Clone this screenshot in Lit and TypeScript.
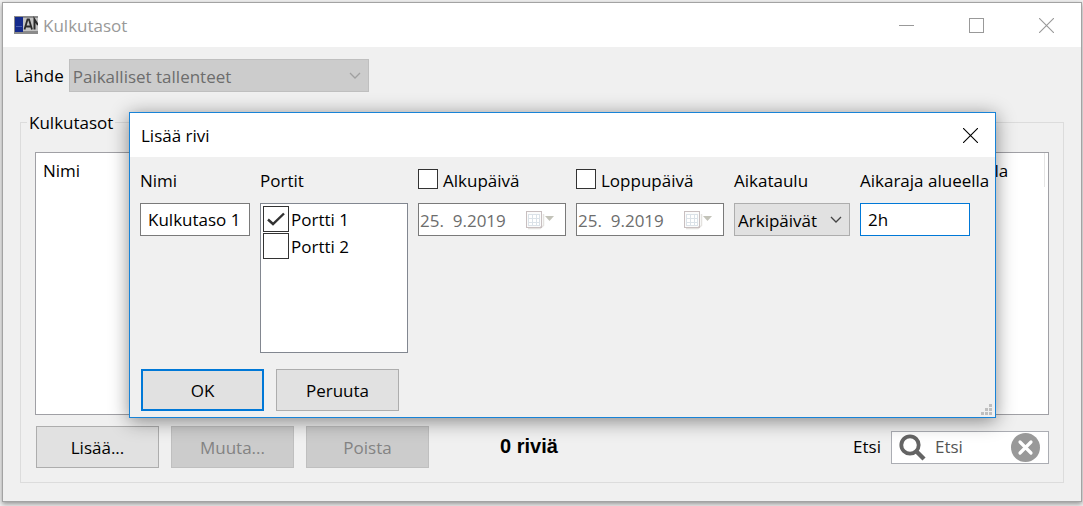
import { LitElement, html, css, svg } from "lit";
import { customElement, property, state } from "lit/decorators.js";

const controls = css`
  * {
    box-sizing: border-box;
  }
  button,
  input,
  select {
    font: inherit;
    color: inherit;
    margin: 0;
    border-radius: 0;
    outline: none;
  }
  .push {
    width: 123px;
    height: 42px;
    padding: 2px 0 0;
    border: 1px solid #adadad;
    background: #e1e1e1;
    color: #000;
  }
  .push:disabled {
    background: #ccc;
    border-color: #bfbfbf;
    color: #838383;
  }
  .push.primary {
    border: 2px solid #0078d7;
  }
  .combo {
    display: grid;
    align-items: center;
  }
  .combo > select,
  .combo > svg {
    grid-area: 1 / 1;
  }
  .combo > select {
    appearance: none;
    width: 100%;
    height: 33px;
    padding: 2px 3px 0;
    border: 1px solid #adadad;
    background: #e1e1e1;
  }
  .combo > select:disabled {
    background: #ccc;
    border-color: #bfbfbf;
    color: #6d6d6d;
    opacity: 1;
  }
  .combo > svg {
    justify-self: end;
    margin-right: 7px;
    pointer-events: none;
  }
  .titlebar {
    display: flex;
    align-items: center;
    height: 44px;
    background: #fff;
  }
  .caption {
    flex: 1;
  }
  .tool {
    display: grid;
    place-items: center;
    padding: 0;
    border: 0;
    background: none;
  }
`;

const chevron = (color: string) => html`
  <svg width="14" height="8" viewBox="0 0 14 8" aria-hidden="true">
    <path d="M2 1 L7 6 L12 1" fill="none" stroke=${color} stroke-width="1.3" />
  </svg>
`;

const cross = html`
  <svg width="15" height="15" viewBox="0 0 15 15" aria-hidden="true">
    <path d="M0 0 L15 15 M15 0 L0 15" fill="none" stroke="currentColor" stroke-width="1.1" />
  </svg>
`;

@customElement("date-field")
export class DateField extends LitElement {
  @property() label = "";
  @property() value = "";
  @state() private active = false;

  static styles = [
    controls,
    css`
      :host {
        display: block;
      }
      .head {
        display: flex;
        align-items: center;
        gap: 5px;
        height: 24px;
        margin-bottom: 11px;
      }
      .head label {
        padding-top: 2px;
      }
      .tick {
        appearance: none;
        width: 20px;
        height: 20px;
        margin-bottom: 3px;
        border: 1px solid #333;
        background: #fff;
      }
      .tick:checked {
        box-shadow: inset 0 0 0 4px #fff;
        background: #333;
      }
      .box {
        display: flex;
        align-items: center;
        height: 33px;
        border: 1px solid #7a7a7a;
        background: #fff;
      }
      .date {
        flex: 1;
        min-width: 0;
        height: 31px;
        padding: 1px 0 0 1px;
        border: 0;
        background: none;
      }
      .date:disabled {
        color: #6d6d6d;
      }
      .pick {
        margin-right: 10px;
      }
    `,
  ];

  render() {
    return html`
      <div class="head">
        <input
          class="tick"
          type="checkbox"
          id="on"
          .checked=${this.active}
          @change=${(e: Event) => (this.active = (e.target as HTMLInputElement).checked)}
        />
        <label for="on">${this.label}</label>
      </div>
      <div class="box">
        <input class="date" aria-label=${this.label} .value=${this.value} ?disabled=${!this.active} />
        <button class="tool pick" aria-label="Kalenteri" ?disabled=${!this.active}>
          <svg width="30" height="20" viewBox="0 0 30 20" aria-hidden="true">
            <path d="M3 18.5 H15 L18.5 15.5 V4" fill="none" stroke="#e4e2df" stroke-width="1.5" />
            <rect x="1.5" y="1.5" width="15" height="16" fill="#fbfbfb" stroke="#c8bfc0" />
            <rect x="3" y="4" width="12" height="12" fill="#dbe2e8" />
            <path
              d="M4 5h3v3H4z M8 5h3v3H8z M12 5h2v3h-2z M4 9h3v3H4z M8 9h3v3H8z M12 9h2v3h-2z M4 13h3v2H4z M8 13h3v2H8z M12 13h2v2h-2z"
              fill="#fff"
            />
            <path d="M14 18 L17 15 V18 Z" fill="#c8bfc0" />
            <path d="M20 6 H29 L24.5 11 Z" fill="#c3c3b9" />
          </svg>
        </button>
      </div>
    `;
  }
}

@customElement("row-dialog")
export class RowDialog extends LitElement {
  @state() private gates = [
    { name: "Portti 1", on: true },
    { name: "Portti 2", on: false },
  ];

  static styles = [
    controls,
    css`
      :host {
        display: block;
        border: 1px solid #1883d7;
        background: #f0f0f0;
        box-shadow: 0 3px 18px rgba(0, 0, 0, 0.45);
      }
      .caption {
        padding: 2px 0 0 11px;
      }
      .close {
        width: 49px;
        height: 44px;
      }
      .fields {
        display: grid;
        grid-template-columns: 110px 148px 148px 148px 116px 1fr;
        gap: 10px;
        padding: 11px 10px 0;
      }
      .field > label,
      .heading {
        display: block;
        height: 24px;
        margin-bottom: 11px;
        padding-top: 1px;
        white-space: nowrap;
      }
      .text {
        width: 110px;
        height: 33px;
        padding: 0 7px;
        border: 1px solid #7a7a7a;
        background: #fff;
      }
      .text.active {
        border-color: #0078d7;
      }
      .list {
        display: flex;
        flex-direction: column;
        gap: 1px;
        height: 150px;
        padding: 2px;
        border: 1px solid #828790;
        background: #fff;
      }
      .gate {
        display: flex;
        align-items: center;
        gap: 2px;
      }
      .gate-name {
        padding-top: 2px;
      }
      .mark {
        display: grid;
      }
      .mark > input,
      .mark > svg {
        grid-area: 1 / 1;
      }
      .mark > input {
        appearance: none;
        width: 26px;
        height: 26px;
        border: 1px solid #333;
        background: #fff;
      }
      .mark > svg {
        place-self: center;
        visibility: hidden;
        pointer-events: none;
      }
      .mark > input:checked + svg {
        visibility: visible;
      }
      .footer {
        display: flex;
        gap: 12px;
        padding: 16px 0 6px 11px;
      }
      .grip {
        align-self: end;
        margin: 0 3px -4px auto;
      }
    `,
  ];

  private toggle(index: number) {
    this.gates = this.gates.map((g, i) => (i === index ? { ...g, on: !g.on } : g));
  }

  render() {
    const dots = [
      [8, 0], [4, 4], [8, 4], [0, 8], [4, 8], [8, 8],
    ];
    return html`
      <header class="titlebar">
        <span class="caption">Lisää rivi</span>
        <button class="tool close" aria-label="Sulje">${cross}</button>
      </header>
      <div class="fields">
        <div class="field">
          <label for="name">Nimi</label>
          <input class="text" id="name" value="Kulkutaso 1" />
        </div>
        <div>
          <span class="heading" id="gates">Portit</span>
          <div class="list" role="group" aria-labelledby="gates">
            ${this.gates.map(
              (g, i) => html`
                <label class="gate">
                  <span class="mark">
                    <input type="checkbox" .checked=${g.on} @change=${() => this.toggle(i)} />
                    <svg width="18" height="14" viewBox="0 0 18 14" aria-hidden="true">
                      <path d="M1 7.5 L6 12 L17 1.5" fill="none" stroke="#333" stroke-width="2.4" />
                    </svg>
                  </span>
                  <span class="gate-name">${g.name}</span>
                </label>
              `
            )}
          </div>
        </div>
        <date-field label="Alkupäivä" value="25.  9.2019"></date-field>
        <date-field label="Loppupäivä" value="25.  9.2019"></date-field>
        <div class="field">
          <label for="schedule">Aikataulu</label>
          <div class="combo">
            <select id="schedule">
              <option>Arkipäivät</option>
            </select>
            ${chevron("#444")}
          </div>
        </div>
        <div class="field">
          <label for="limit">Aikaraja alueella</label>
          <input class="text active" id="limit" value="2h" />
        </div>
      </div>
      <footer class="footer">
        <button class="push primary">OK</button>
        <button class="push">Peruuta</button>
        <svg class="grip" width="11" height="11" viewBox="0 0 11 11" aria-hidden="true">
          ${dots.map(([x, y]) => svg`<rect x=${x} y=${y} width="3" height="3" fill="#bfbfbf" />`)}
        </svg>
      </footer>
    `;
  }
}

@customElement("app-root")
export class AppRoot extends LitElement {
  static styles = [
    controls,
    css`
      :host {
        display: block;
        padding: 2px 1px 4px 2px;
        background: #f2f2f2;
        color: #000;
        font: 17px/24px "Open Sans", "Noto Sans", sans-serif;
      }
      .window {
        position: relative;
        border: 1px solid #a3a3a3;
        background: #f0f0f0;
        box-shadow: 0 2px 5px rgba(0, 0, 0, 0.4);
      }
      .main-title {
        color: #999;
      }
      .main-title .caption {
        padding: 2px 0 0 5px;
      }
      .logo {
        margin: 0 0 0 11px;
      }
      .sys {
        width: 70px;
        height: 44px;
        color: #999;
      }
      .source {
        display: flex;
        align-items: center;
        gap: 5px;
        padding: 12px 12px 18px;
      }
      .source .combo {
        width: 300px;
      }
      .group {
        min-width: 0;
        margin: 0 17px 18px;
        padding: 17px 14px 14px;
        border: 1px solid #dcdcdc;
      }
      .group > legend {
        margin-left: -8px;
        padding: 1px 2px 0;
      }
      .grid {
        height: 263px;
        border: 1px solid #a0a0a5;
        background: #fff;
      }
      .grid table {
        width: calc(100% - 3px);
        table-layout: fixed;
        border-collapse: collapse;
      }
      .grid th {
        height: 34px;
        padding: 1px 0 0 7px;
        text-align: left;
        font-weight: 400;
        white-space: nowrap;
        border-right: 1px solid #e5e5e5;
      }
      .grid .limit {
        width: 173px;
      }
      .actions {
        display: flex;
        align-items: center;
        gap: 12px;
        padding: 11px 0 0 1px;
      }
      .count {
        margin-left: 59px;
        padding-bottom: 2px;
        font: bold 20px/24px "Liberation Sans", Arial, sans-serif;
      }
      .find {
        display: flex;
        align-items: center;
        gap: 10px;
        margin-left: auto;
      }
      .search {
        display: flex;
        align-items: center;
        width: 158px;
        height: 33px;
        padding: 0 8px 0 7px;
        border: 1px solid #abadb3;
        background: #fff;
      }
      .search input {
        flex: 1;
        min-width: 0;
        padding: 0 0 0 9px;
        border: 0;
        background: none;
      }
      .search input::placeholder {
        color: #555;
        opacity: 1;
      }
      row-dialog {
        position: absolute;
        top: 109px;
        left: 126px;
        right: 85px;
      }
    `,
  ];

  render() {
    return html`
      <main class="window">
        <header class="titlebar main-title">
          <svg class="logo" width="24" height="20" viewBox="0 0 24 20" aria-hidden="true">
            <rect x="0" y="1" width="24" height="18" fill="#8b8b8b" />
            <rect x="9" y="3" width="15" height="13" fill="#c4c4c4" />
            <rect x="1" y="2" width="8" height="15" fill="#142a8c" />
            <rect x="2" y="11" width="6" height="1" fill="#4a5fb0" />
            <path d="M10.5 14.5 L13.5 4.5 H15 L18 14.5 M12 11.5 H17" fill="none" stroke="#2b2b2b" stroke-width="1.8" />
            <path d="M20.5 14.5 V4.5 L24 10" fill="none" stroke="#2b2b2b" stroke-width="2" />
          </svg>
          <span class="caption">Kulkutasot</span>
          <button class="tool sys" aria-label="Pienennä">
            <svg width="15" height="15" viewBox="0 0 15 15" aria-hidden="true">
              <path d="M0 7.5 H15" stroke="currentColor" />
            </svg>
          </button>
          <button class="tool sys" aria-label="Suurenna">
            <svg width="15" height="15" viewBox="0 0 15 15" aria-hidden="true">
              <rect x="0.5" y="0.5" width="14" height="14" fill="none" stroke="currentColor" />
            </svg>
          </button>
          <button class="tool sys" aria-label="Sulje">${cross}</button>
        </header>
        <div class="source">
          <label for="source">Lähde</label>
          <div class="combo">
            <select id="source" disabled>
              <option>Paikalliset tallenteet</option>
            </select>
            ${chevron("#a0a0a0")}
          </div>
        </div>
        <fieldset class="group">
          <legend>Kulkutasot</legend>
          <div class="grid">
            <table>
              <thead>
                <tr>
                  <th scope="col">Nimi</th>
                  <th scope="col" class="limit">Aikaraja alueella</th>
                </tr>
              </thead>
            </table>
          </div>
          <div class="actions">
            <button class="push">Lisää...</button>
            <button class="push" disabled>Muuta...</button>
            <button class="push" disabled>Poista</button>
            <span class="count">0 riviä</span>
            <div class="find">
              <label for="find">Etsi</label>
              <div class="search">
                <svg width="27" height="27" viewBox="0 0 27 27" aria-hidden="true">
                  <circle cx="11" cy="11" r="8.7" fill="none" stroke="#646464" stroke-width="3.8" />
                  <path d="M17 17 L25 25" stroke="#646464" stroke-width="4.4" />
                </svg>
                <input id="find" placeholder="Etsi" />
                <button class="tool" aria-label="Tyhjennä">
                  <svg width="29" height="29" viewBox="0 0 29 29" aria-hidden="true">
                    <circle cx="14.5" cy="14.5" r="14.5" fill="#999" />
                    <path d="M9 9 L20 20 M20 9 L9 20" stroke="#fff" stroke-width="3.2" stroke-linecap="round" />
                  </svg>
                </button>
              </div>
            </div>
          </div>
        </fieldset>
        <row-dialog></row-dialog>
      </main>
    `;
  }
}
